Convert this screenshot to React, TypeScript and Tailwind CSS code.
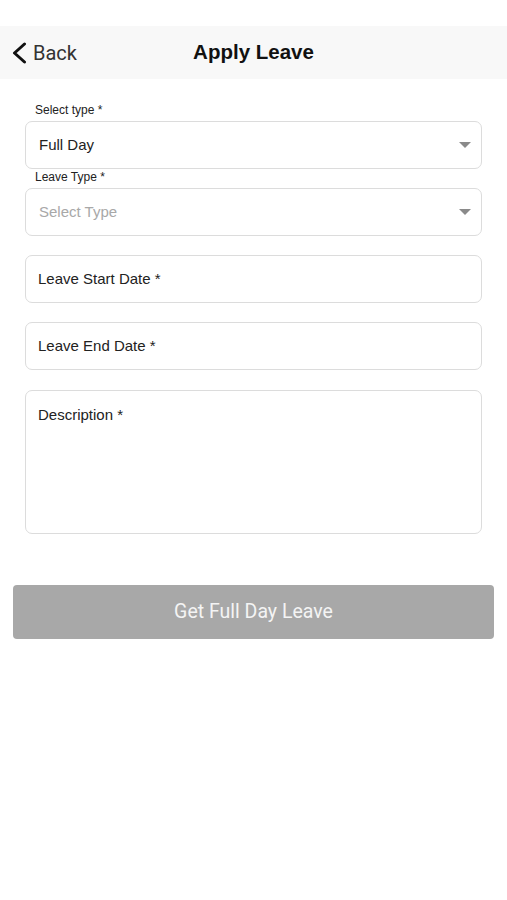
import React from "react";

const Caret = () => (
  <svg width="12" height="7" viewBox="0 0 12 7" className="shrink-0">
    <path d="M0 0 L12 0 L6 6 Z" fill="#8a8a8a" />
  </svg>
);

export default function App() {
  const sans = { fontFamily: '"Liberation Sans", Arial, sans-serif' };
  return (
    <div className="w-[507px] min-h-[900px] bg-white" style={sans}>
      <div className="h-[26px]" />
      <div className="h-[53px] bg-[#f8f8f8] flex items-center relative">
        <div className="flex items-center pl-[11px] gap-[6px]">
          <svg width="16" height="22" viewBox="0 0 16 22">
            <path d="M13.5 2 L3.5 11 L13.5 20" fill="none" stroke="#111" strokeWidth="3" strokeLinecap="round" strokeLinejoin="round" />
          </svg>
          <span className="text-[20px] text-[#333] leading-none" style={{ fontFamily: 'Roboto, "Liberation Sans", sans-serif' }}>
            Back
          </span>
        </div>
        <div className="absolute left-0 right-0 top-0 bottom-0 flex items-center justify-center pointer-events-none">
          <span className="text-[20.5px] font-bold text-[#111] leading-none">Apply Leave</span>
        </div>
      </div>

      <div className="px-[25px] pt-[23px]">
        <div className="h-[16px] leading-[16px] text-[12px] text-[#222] pl-[10px] mb-[3px]">Select type *</div>
        <div className="h-[48px] border border-[#dcdcdc] rounded-[7px] flex items-center justify-between pl-[13px] pr-[10px]">
          <span className="text-[15px] text-[#222]">Full Day</span>
          <Caret />
        </div>
        <div className="h-[16px] leading-[16px] text-[12px] text-[#222] pl-[10px] mb-[3px]">Leave Type *</div>
        <div className="h-[48px] border border-[#dcdcdc] rounded-[7px] flex items-center justify-between pl-[13px] pr-[10px]">
          <span className="text-[15px] text-[#a8a8a8]">Select Type</span>
          <Caret />
        </div>

        <div className="h-[48px] mt-[19px] border border-[#dcdcdc] rounded-[7px] flex items-center pl-[12px]">
          <span className="text-[15px] text-[#222]">Leave Start Date *</span>
        </div>
        <div className="h-[48px] mt-[19px] border border-[#dcdcdc] rounded-[7px] flex items-center pl-[12px]">
          <span className="text-[15px] text-[#222]">Leave End Date *</span>
        </div>
        <div className="h-[144px] mt-[20px] border border-[#dcdcdc] rounded-[7px] pl-[12px] pt-[12px]">
          <span className="text-[15px] text-[#222] leading-[18px]">Description *</span>
        </div>
      </div>

      <div className="px-[13px] mt-[51px]">
        <div className="h-[54px] w-[481px] bg-[#a8a8a8] rounded-[4px] flex items-center justify-center">
          <span className="text-[19.5px] text-[#f4f4f4]" style={{ fontFamily: 'Roboto, "Liberation Sans", sans-serif' }}>
            Get Full Day Leave
          </span>
        </div>
      </div>
    </div>
  );
}
